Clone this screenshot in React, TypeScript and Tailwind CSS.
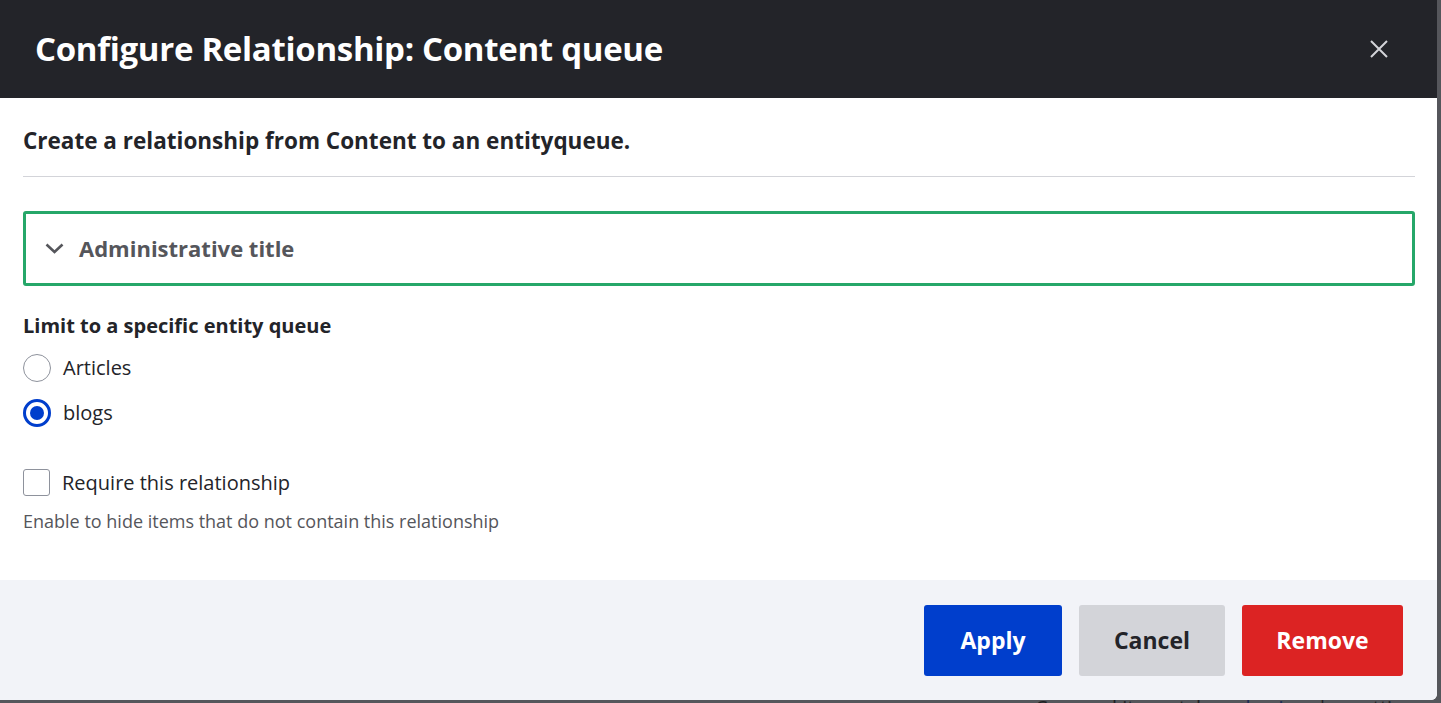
const font = { fontFamily: '"Open Sans", "Noto Sans", sans-serif' };

function Radio({ label, checked }: { label: string; checked?: boolean }) {
  return (
    <label className="flex items-center gap-3 h-[28px]">
      {checked ? (
        <span className="w-[28px] h-[28px] rounded-full border-[3px] border-[#003ecc] flex items-center justify-center">
          <span className="w-[14px] h-[14px] rounded-full bg-[#003ecc]" />
        </span>
      ) : (
        <span className="w-[28px] h-[28px] rounded-full border border-[#8e929c] bg-white" />
      )}
      <span className="text-[20px] text-[#232429]">{label}</span>
    </label>
  );
}

export default function App() {
  return (
    <div className="h-[703px] w-[1441px] overflow-hidden bg-[#55565b]" style={font}>
      <div className="w-[1437px] h-[700px] bg-white rounded-br-[6px] overflow-hidden flex flex-col">
        {/* header */}
        <div className="h-[98px] bg-[#232429] flex items-center justify-between pl-[35px] pr-[49px] shrink-0">
          <h1 className="text-white text-[33px] font-bold tracking-[-0.3px]">Configure Relationship: Content queue</h1>
          <svg width="18" height="18" viewBox="0 0 18 18" className="text-[#d3d4d9]">
            <path d="M1 1L17 17M17 1L1 17" stroke="currentColor" strokeWidth="2" />
          </svg>
        </div>

        {/* body */}
        <div className="flex-1 px-[23px] pr-[22px]">
          <p className="mt-[26px] text-[22.5px] font-bold text-[#232429]">
            Create a relationship from Content to an entityqueue.
          </p>
          <div className="mt-[18px] h-px bg-[#d3d4d9]" />

          <div className="mt-[34px] h-[75px] border-[3px] border-[#26a769] rounded-[3px] flex items-center pl-[19px] gap-[15px]">
            <svg width="19" height="11" viewBox="0 0 19 11" className="text-[#55565b]">
              <path d="M1.5 1.5L9.5 9L17.5 1.5" fill="none" stroke="currentColor" strokeWidth="2.6" />
            </svg>
            <span className="text-[22px] font-bold text-[#55565b]">Administrative title</span>
          </div>

          <div className="mt-[25px] text-[20px] font-bold text-[#232429]">Limit to a specific entity queue</div>
          <div className="mt-[13px] flex flex-col gap-[17px]">
            <Radio label="Articles" />
            <Radio label="blogs" checked />
          </div>

          <label className="mt-[41px] flex items-center gap-3">
            <span className="w-[27px] h-[27px] border border-[#8e929c] rounded-[3px] bg-white" />
            <span className="text-[20px] text-[#232429]">Require this relationship</span>
          </label>
          <p className="mt-[10px] text-[18px] text-[#55565b]">Enable to hide items that do not contain this relationship</p>
        </div>

        {/* footer */}
        <div className="h-[120px] bg-[#f2f3f8] flex items-start justify-end gap-[17px] pr-[34px] pt-[25px] shrink-0">
          <button className="w-[138px] h-[71px] rounded-[3px] bg-[#003ecc] text-white text-[23px] font-bold">Apply</button>
          <button className="w-[146px] h-[71px] rounded-[3px] bg-[#d3d4d9] text-[#232429] text-[23px] font-bold">Cancel</button>
          <button className="w-[161px] h-[71px] rounded-[3px] bg-[#dc2323] text-white text-[23px] font-bold">Remove</button>
        </div>
      </div>
      <div className="flex text-[20px] text-[#1f1f22] leading-none -mt-[2px]">
        <span className="ml-[1035px]">Carousel item style</span>
        <span className="ml-[12px]">:</span>
        <span className="ml-[16px] text-[#1a2a55]">basic</span>
        <span className="ml-[24px]">|</span>
        <span className="ml-[24px]">settings</span>
      </div>
    </div>
  );
}
